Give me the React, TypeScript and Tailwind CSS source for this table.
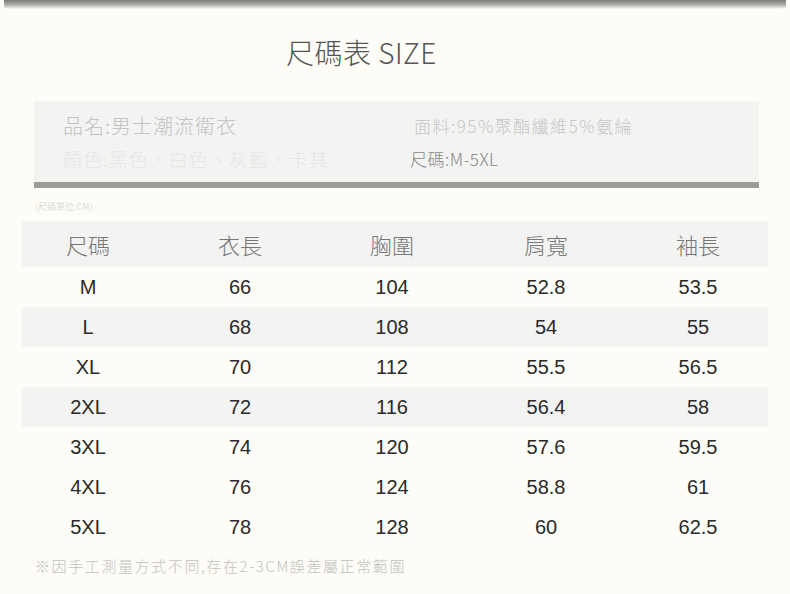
const rows = [
  ["M", "66", "104", "52.8", "53.5"],
  ["L", "68", "108", "54", "55"],
  ["XL", "70", "112", "55.5", "56.5"],
  ["2XL", "72", "116", "56.4", "58"],
  ["3XL", "74", "120", "57.6", "59.5"],
  ["4XL", "76", "124", "58.8", "61"],
  ["5XL", "78", "128", "60", "62.5"],
];

const heads = ["尺碼", "衣長", "胸圍", "肩寬", "袖長"];

const cjk = "font-['Noto_Sans_CJK_TC',sans-serif]";

export default function App() {
  return (
    <div className="flex h-[594px] w-[790px] flex-col overflow-hidden bg-[#fdfcf6]">
      {/* top shadow band */}
      <div className="mx-[4px] h-[9px] rounded-b-sm bg-gradient-to-b from-[#7d7d7b] via-[#a9a9a6] to-[#fdfcf6]" />

      <h1 className={`${cjk} mt-[25px] pl-[286px] text-[28px] font-light leading-[36px] tracking-[0.5px] text-[#555]`}>
        尺碼表 SIZE
      </h1>

      {/* product info */}
      <div className={`${cjk} ml-[34px] mt-[31px] w-[725px] border-b-[6px] border-[#9b9c98] bg-[#f3f3f2]`}>
        <div className="flex h-[81px] flex-col justify-center gap-[4px] pt-[1px] font-light">
          <div className="flex items-center">
            <span className="w-[351px] pl-[29px] text-[20px] tracking-[1px] text-[#c2c2c2]">品名:男士潮流衛衣</span>
            <span className="pl-[29px] text-[17px] tracking-[1.5px] text-[#c6c6c6]">面料:95%聚酯纖維5%氨綸</span>
          </div>
          <div className="flex items-center">
            <span className="w-[351px] pl-[29px] text-[19px] tracking-[1px] text-[#e6e6e4]">顏色:黑色、白色、灰藍、卡其</span>
            <span className="pl-[25px] text-[17px] tracking-[0.5px] text-[#888]">尺碼:M-5XL</span>
          </div>
        </div>
      </div>

      <div className={`${cjk} ml-[35px] mt-[12px] text-[9px] leading-[14px] text-[#dcdcd8]`}>(尺碼單位:CM)</div>

      {/* size table */}
      <div className="ml-[22px] mt-[7px] w-[746px]">
        <div className={`${cjk} grid h-[46px] grid-cols-[132px_172px_132px_176px_128px] items-center bg-[#f3f3f2] text-[22px] font-light text-[#777]`}>
          {heads.map((h) => (
            <div key={h} className="text-center">{h}</div>
          ))}
        </div>
        {rows.map((r, i) => (
          <div
            key={r[0]}
            className={`grid h-[40px] grid-cols-[132px_172px_132px_176px_128px] items-center font-['Liberation_Sans',sans-serif] text-[20px] text-[#2a2a2a] ${
              i === 1 || i === 3 ? "bg-[#f3f3f2]" : ""
            }`}
          >
            {r.map((c, j) => (
              <div key={j} className="text-center">{c}</div>
            ))}
          </div>
        ))}
      </div>

      <div className={`${cjk} ml-[35px] mt-[8px] text-[15px] font-light tracking-[1.6px] text-[#c2c2c0]`}>
        ※因手工測量方式不同,存在2-3CM誤差屬正常範圍
      </div>
    </div>
  );
}
